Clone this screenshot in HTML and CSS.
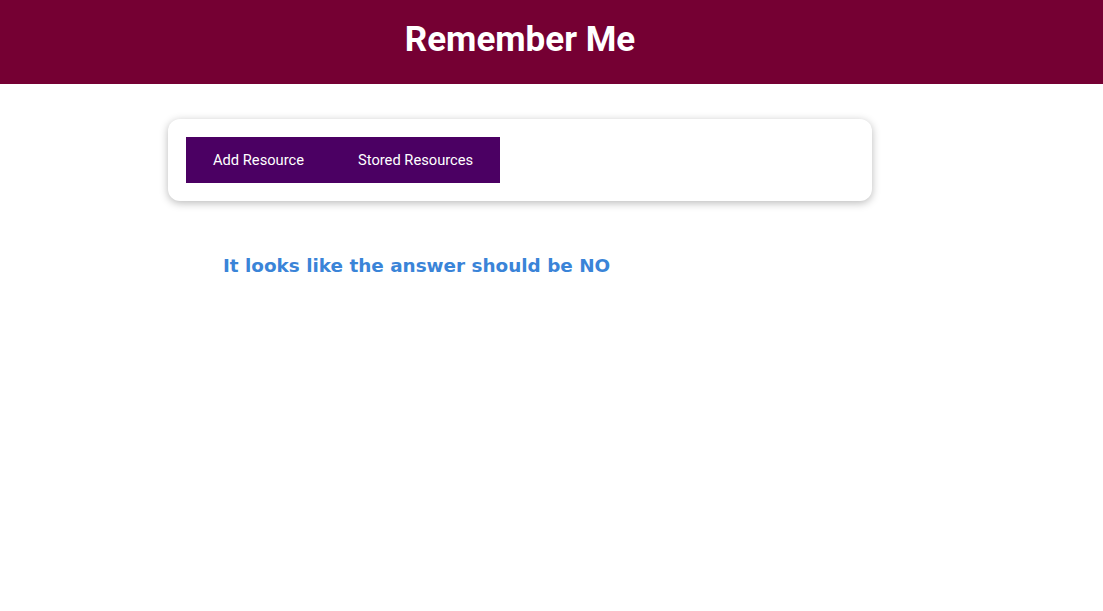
FILE: index.html
```html
<!DOCTYPE html>
<html>
<head>
<meta charset="utf-8">
<link rel="stylesheet" href="styles.css">
</head>
<body>
<header class="topbar">
  <div class="topbar-inner">
    <h1 class="title">Remember Me</h1>
  </div>
</header>
<main class="page">
  <div class="card">
    <nav class="tabs">
      <button class="tab">Add Resource</button>
      <button class="tab">Stored Resources</button>
    </nav>
  </div>
  <h3 class="message">It looks like the answer should be NO</h3>
</main>
</body>
</html>
```
FILE: styles.css
```css
html, body {
  margin: 0;
  padding: 0;
  background: #ffffff;
}
body {
  font-family: Roboto, "Liberation Sans", sans-serif;
}
.topbar {
  background: #750033;
  height: 84px;
}
.topbar-inner {
  width: 1040px;
  height: 100%;
  display: flex;
  align-items: center;
  justify-content: center;
}
.title {
  margin: 0 0 4px 0;
  color: #ffffff;
  font-family: Roboto, sans-serif;
  font-weight: 700;
  font-size: 35px;
  line-height: 40px;
}
.page {
  width: 1040px;
  padding-top: 35px;
}
.card {
  width: 704px;
  margin: 0 auto;
  box-sizing: border-box;
  padding: 18px;
  background: #ffffff;
  border-radius: 12px;
  box-shadow: 0 2px 8px rgba(0, 0, 0, 0.28);
}
.tabs {
  display: flex;
}
.tab {
  background: #4b0063;
  color: #ffffff;
  border: none;
  height: 46px;
  padding: 0 27px;
  font-family: Roboto, sans-serif;
  font-size: 14.7px;
}
.message {
  margin: 54px 0 0 223px;
  color: #3a84d8;
  font-family: "DejaVu Sans", sans-serif;
  font-weight: 700;
  font-size: 18.4px;
}
```
